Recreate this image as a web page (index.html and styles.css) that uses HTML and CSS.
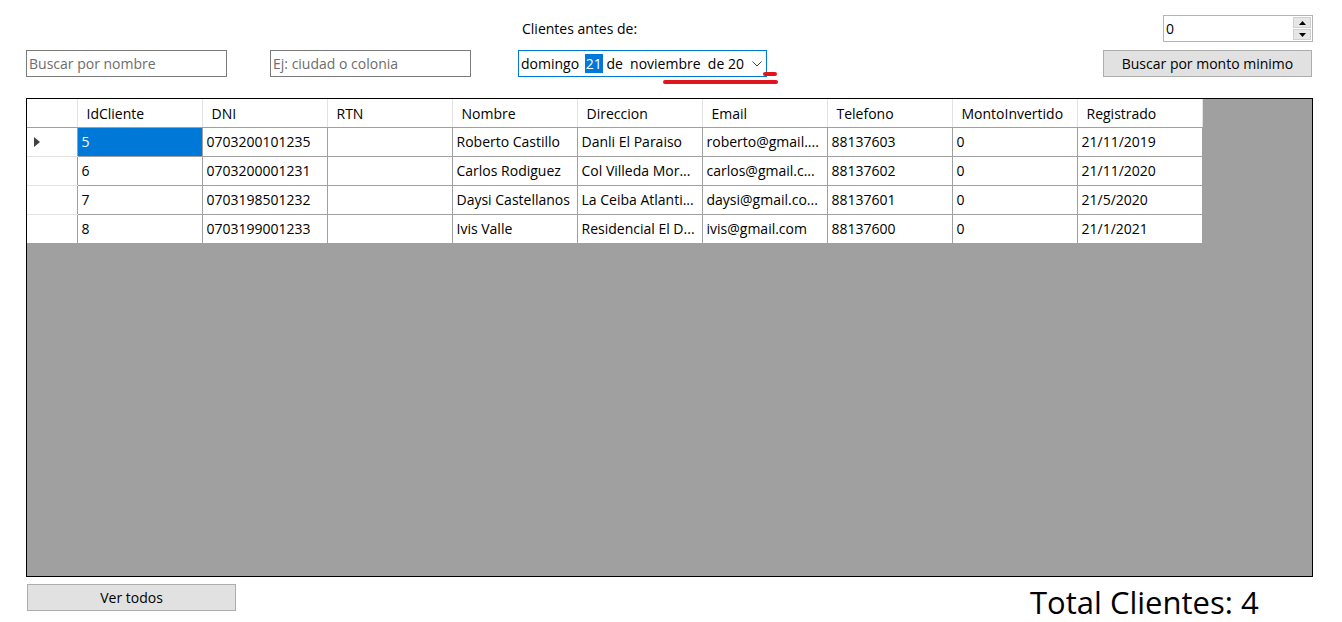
FILE: index.html
```html
<!DOCTYPE html>
<html lang="es">
<head>
<meta charset="utf-8">
<title>Clientes</title>
<link rel="stylesheet" href="styles.css">
</head>
<body>
<div class="form">
  <div class="row-top">
    <span class="date-label">Clientes antes de:</span>
    <div class="numeric">
      <span class="num-value">0</span>
      <div class="spin">
        <span class="spin-btn"><svg width="7" height="4" viewBox="0 0 7 4"><path d="M3.5 0L7 4H0z" fill="#000"/></svg></span>
        <span class="spin-btn"><svg width="7" height="4" viewBox="0 0 7 4"><path d="M0 0H7L3.5 4z" fill="#000"/></svg></span>
      </div>
    </div>
  </div>
  <div class="row-filters">
    <div class="textbox name-box"><span class="placeholder">Buscar por nombre</span></div>
    <div class="textbox place-box"><span class="placeholder">Ej: ciudad o colonia</span></div>
    <div class="datepicker">
      <span class="date-text">domingo <span class="sel">21</span> de&nbsp; noviembre&nbsp; de 20</span>
      <svg class="chev" width="10" height="6" viewBox="0 0 10 6"><path d="M0.5 0.5L5 5L9.5 0.5" fill="none" stroke="#444" stroke-width="1"/></svg>
      <span class="mark mark-short"></span>
      <span class="mark mark-long"></span>
    </div>
    <div class="spacer"></div>
    <button class="btn btn-monto">Buscar por monto minimo</button>
  </div>
  <div class="grid">
    <table class="data">
      <colgroup>
        <col class="c-rowhead">
        <col class="c"><col class="c"><col class="c"><col class="c"><col class="c"><col class="c"><col class="c"><col class="c"><col class="c">
      </colgroup>
      <thead>
        <tr>
          <th class="rh"></th>
          <th>IdCliente</th><th>DNI</th><th>RTN</th><th>Nombre</th><th>Direccion</th><th>Email</th><th>Telefono</th><th>MontoInvertido</th><th>Registrado</th>
        </tr>
      </thead>
      <tbody>
        <tr>
          <td class="rh"><span class="arrow"></span></td>
          <td class="selected">5</td><td>0703200101235</td><td></td><td>Roberto Castillo</td><td>Danli El Paraiso</td><td>roberto@gmail....</td><td>88137603</td><td>0</td><td>21/11/2019</td>
        </tr>
        <tr>
          <td class="rh"></td>
          <td>6</td><td>0703200001231</td><td></td><td>Carlos Rodiguez</td><td>Col Villeda Mor...</td><td>carlos@gmail.c...</td><td>88137602</td><td>0</td><td>21/11/2020</td>
        </tr>
        <tr>
          <td class="rh"></td>
          <td>7</td><td>0703198501232</td><td></td><td>Daysi Castellanos</td><td>La Ceiba Atlanti...</td><td>daysi@gmail.co...</td><td>88137601</td><td>0</td><td>21/5/2020</td>
        </tr>
        <tr>
          <td class="rh"></td>
          <td>8</td><td>0703199001233</td><td></td><td>Ivis Valle</td><td>Residencial El D...</td><td>ivis@gmail.com</td><td>88137600</td><td>0</td><td>21/1/2021</td>
        </tr>
      </tbody>
    </table>
  </div>
  <div class="row-bottom">
    <button class="btn btn-todos">Ver todos</button>
    <span class="total">Total Clientes: 4</span>
  </div>
</div>
</body>
</html>
```

FILE: styles.css
```css
* { box-sizing: border-box; }
html, body { margin: 0; padding: 0; background: #fff; }
body {
  font-family: "Open Sans", "Noto Sans", "DejaVu Sans", sans-serif;
  font-size: 14px;
  color: #000;
  width: 1342px;
  height: 622px;
  overflow: hidden;
}
.form { padding: 15px 0 0 26px; }

.row-top { display: flex; align-items: center; height: 27px; }
.date-label { margin-left: 496px; width: 300px; line-height: 20px; }
.numeric {
  margin-left: 341px;
  width: 150px; height: 27px;
  border: 1px solid #b4b4b4;
  display: flex; align-items: center;
  background: #fff;
}
.num-value { flex: 1; padding-left: 2px; }
.spin { display: flex; flex-direction: column; width: 18px; height: 23px; margin-right: 1px; gap: 1px; }
.spin-btn {
  flex: 1; background: #e6e6e6; border: 1px solid #d0d0d0;
  display: flex; align-items: center; justify-content: center;
}
.spin-btn svg { display: block; }

.row-filters { display: flex; align-items: center; margin-top: 8px; height: 27px; }
.textbox {
  height: 27px; width: 201px;
  border: 1px solid #7a7a7a;
  display: flex; align-items: center;
  padding-left: 2px;
  background: #fff;
}
.placeholder { color: #6d6d6d; }
.place-box { margin-left: 43px; }
.datepicker {
  position: relative;
  margin-left: 47px;
  width: 249px; height: 27px;
  border: 1px solid #0078d7;
  display: flex; align-items: center;
  padding-left: 2px;
  white-space: nowrap;
}
.date-text { flex: 1; overflow: hidden; }
.sel { background: #0078d7; color: #fff; padding: 0 1px; margin-left: 2px; }
.chev { flex: none; margin-right: 4px; }
.mark { position: absolute; background: #e0141c; border-radius: 3px; }
.mark-short { left: 244px; top: 21px; width: 14px; height: 4px; }
.mark-long { left: 144px; top: 29px; width: 115px; height: 4px; }
.spacer { flex: 1; }
.btn {
  font-family: inherit; font-size: 14px; color: #000;
  background: #e1e1e1;
  border: 1px solid #adadad;
  height: 27px; padding: 0;
}
.btn-monto { width: 209px; margin-right: 30px; margin-top: -1px; }

.grid {
  margin-top: 21px;
  width: 1287px; height: 479px;
  border: 1px solid #000;
  background: #a0a0a0;
}
.data { border-collapse: collapse; table-layout: fixed; width: 1175px; background: #fff; }
.c-rowhead { width: 50px; }
.c { width: 125px; }
.data th {
  height: 28px; font-weight: normal; text-align: left;
  padding: 1px 0 0 9px;
  border-right: 1px solid #e3e3e3;
  border-bottom: 1px solid #a0a0a0;
  white-space: nowrap; overflow: hidden;
}
.data td {
  height: 29px; padding: 0 0 0 4px;
  border: 1px solid #a0a0a0;
  white-space: nowrap; overflow: hidden;
}
.data td.rh { border-left: none; border-top-color: #e3e3e3; border-bottom-color: #e3e3e3; padding: 0 0 0 7px; }
.data tr:first-child td.rh { border-top-color: #a0a0a0; }
.data tr:last-child td { border-bottom: none; }
.data th.rh { padding: 0; }
.data td.selected { background: #0078d7; color: #fff; }
.arrow {
  display: block; width: 0; height: 0;
  border-top: 5px solid transparent;
  border-bottom: 5px solid transparent;
  border-left: 6px solid #404040;
}

.row-bottom { display: flex; align-items: flex-start; margin-top: 7px; }
.btn-todos { width: 209px; margin-left: 1px; }
.total { margin-left: 794px; font-size: 31px; line-height: 31px; margin-top: 3px; }
```
